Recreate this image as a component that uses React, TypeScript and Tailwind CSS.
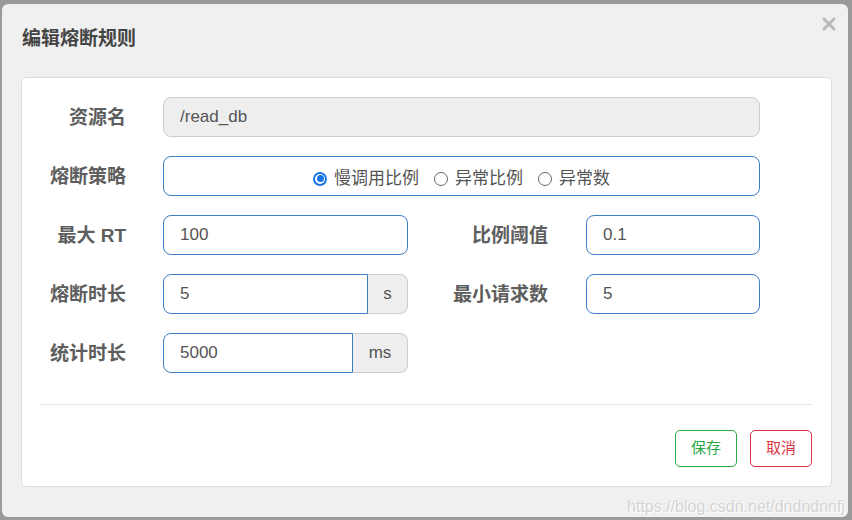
import React from 'react';

const font = "font-['Liberation_Sans','Noto_Sans_CJK_SC',sans-serif]";

function Label({ text, w }: { text: string; w: string }) {
  return (
    <div className={`${w} shrink-0 text-right text-[19px] font-bold text-[#5e5e5e] leading-none`}>
      {text}
    </div>
  );
}

function Radio({ checked, label }: { checked?: boolean; label: string }) {
  return (
    <label className="flex items-center gap-[7px]">
      {checked ? (
        <span className="w-[14px] h-[14px] rounded-full border-[2px] border-[#1a73e8] flex items-center justify-center">
          <span className="w-[7px] h-[7px] rounded-full bg-[#1a73e8]" />
        </span>
      ) : (
        <span className="w-[14px] h-[14px] rounded-full border border-[#666] bg-white" />
      )}
      <span className="text-[17px] text-[#555]">{label}</span>
    </label>
  );
}

export default function App() {
  const input =
    'h-[40px] border border-[#3d7ec4] bg-white px-[16px] text-[17px] text-[#555] flex items-center';

  return (
    <div className={`relative w-[852px] h-[520px] bg-[#9a9a9a] pt-[4px] pl-[2px] pr-[4px] pb-[3px] ${font}`}>
      <div className="relative h-full bg-[#f0f0f0] rounded-[6px]">
        {/* Header */}
        <div className="h-[73px] pl-[20px] pt-[21px]">
          <span className="text-[19px] font-bold text-[#444]">编辑熔断规则</span>
        </div>
        <svg className="absolute top-[13px] right-[12px]" width="14" height="14" viewBox="0 0 14 14">
          <path d="M2 2 L12 12 M12 2 L2 12" stroke="#b8b8b8" strokeWidth="3" strokeLinecap="round" />
        </svg>

        {/* Body */}
        <div className="ml-[19px] mr-[16px] bg-white border border-[#dcdcdc] rounded-[5px]">
          <div className="pt-[19px] flex flex-col gap-[19px]">
            <div className="flex items-center">
              <Label text="资源名" w="w-[104px]" />
              <div className="ml-[37px] w-[597px] h-[40px] rounded-[8px] border border-[#ccc] bg-[#eee] px-[16px] flex items-center text-[17px] text-[#555]">
                /read_db
              </div>
            </div>

            <div className="flex items-center">
              <Label text="熔断策略" w="w-[104px]" />
              <div className={`ml-[37px] w-[597px] rounded-[8px] ${input} justify-center gap-[15px] pt-[5px]`}>
                <Radio checked label="慢调用比例" />
                <Radio label="异常比例" />
                <Radio label="异常数" />
              </div>
            </div>

            <div className="flex items-center">
              <Label text="最大 RT" w="w-[104px]" />
              <div className={`ml-[37px] w-[245px] rounded-[8px] ${input}`}>100</div>
              <Label text="比例阈值" w="w-[140px]" />
              <div className={`ml-[38px] w-[174px] rounded-[8px] ${input}`}>0.1</div>
            </div>

            <div className="flex items-center">
              <Label text="熔断时长" w="w-[104px]" />
              <div className="ml-[37px] w-[245px] flex">
                <div className={`w-[205px] rounded-l-[8px] ${input}`}>5</div>
                <div className="flex-1 h-[40px] border border-l-0 border-[#ccc] bg-[#eee] rounded-r-[8px] flex items-center justify-center text-[17px] text-[#555]">
                  s
                </div>
              </div>
              <Label text="最小请求数" w="w-[140px]" />
              <div className={`ml-[38px] w-[174px] rounded-[8px] ${input}`}>5</div>
            </div>

            <div className="flex items-center">
              <Label text="统计时长" w="w-[104px]" />
              <div className="ml-[37px] w-[245px] flex">
                <div className={`w-[190px] rounded-l-[8px] ${input}`}>5000</div>
                <div className="flex-1 h-[40px] border border-l-0 border-[#ccc] bg-[#eee] rounded-r-[8px] flex items-center justify-center text-[17px] text-[#555]">
                  ms
                </div>
              </div>
            </div>
          </div>

          <div className="mt-[31px] ml-[18px] mr-[19px] border-t border-[#e5e5e5]" />

          <div className="mt-[25px] pb-[19px] pr-[19px] flex justify-end gap-[13px]">
            <button className="w-[62px] h-[37px] rounded-[5px] border border-[#28a745] bg-white text-[15px] text-[#28a745]">
              保存
            </button>
            <button className="w-[62px] h-[37px] rounded-[5px] border border-[#dc3545] bg-white text-[15px] text-[#dc3545]">
              取消
            </button>
          </div>
        </div>
      </div>

      {/* Watermark */}
      <div className="absolute right-[7px] bottom-[5px] text-[16px] text-[#d4d4d4] leading-none [text-shadow:1px_1px_0_#ffffff]">
        https://blog.csdn.net/dndndnnfj
      </div>
    </div>
  );
}
